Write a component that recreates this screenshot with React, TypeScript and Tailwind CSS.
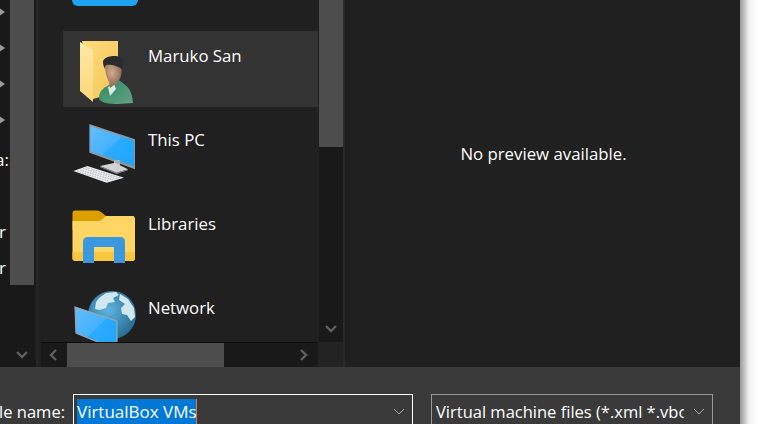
import React from "react";

const Chevron = ({ dir }: { dir: "down" | "left" | "right" }) => {
  const d: Record<string, string> = {
    down: "M1 3 L6 8 L11 3",
    left: "M8 1 L3 6 L8 11",
    right: "M3 1 L8 6 L3 11",
  };
  return (
    <svg width="12" height="12" viewBox="0 0 12 12" className="block" fill="none">
      <path d={d[dir]} stroke="#5f5f5f" strokeWidth="2.4" />
    </svg>
  );
};

const SmallChevron = () => (
  <svg width="12" height="8" viewBox="0 0 12 8" fill="none" className="block">
    <path d="M1 1 L6 6 L11 1" stroke="#a8a8a8" strokeWidth="1" />
  </svg>
);

const TreeArrow = () => (
  <svg width="7" height="10" viewBox="0 0 7 10" className="block">
    <path d="M0 0 L7 5 L0 10 Z" fill="#9a9a9a" />
  </svg>
);

const UserIcon = () => (
  <svg width="64" height="66" viewBox="0 0 64 66" className="block">
    <defs>
      <linearGradient id="uf1" x1="0" y1="0" x2="1" y2="1">
        <stop offset="0" stopColor="#ffdc7d" />
        <stop offset="1" stopColor="#f3c55a" />
      </linearGradient>
      <linearGradient id="uf2" x1="0" y1="0" x2="0" y2="1">
        <stop offset="0" stopColor="#ffe9a6" />
        <stop offset="1" stopColor="#fcd878" />
      </linearGradient>
      <radialGradient id="uface" cx="0.4" cy="0.35" r="0.8">
        <stop offset="0" stopColor="#d0ac90" />
        <stop offset="1" stopColor="#77543f" />
      </radialGradient>
      <linearGradient id="ushirt" x1="0" y1="0" x2="1" y2="1">
        <stop offset="0" stopColor="#2f8a62" />
        <stop offset="1" stopColor="#62a284" />
      </linearGradient>
    </defs>
    <path d="M10 2 H46 V53 L21 60 Z" fill="url(#uf1)" />
    <path d="M8 3 L21 11 V63 L8 52 Z" fill="url(#uf2)" />
    <path d="M27 60 C27 52 31 49 37 46 L47 41 C52 46 60 47 61 64 L46 65 C36 65 30 64 27 60 Z" fill="url(#ushirt)" />
    <path d="M36 48 L42 45 L44 50 L38 57 Z" fill="#dbe9e7" />
    <path d="M33 25 H50 C50 34 49 40 45 44 L38 49 L37 43 C34 38 33 32 33 25 Z" fill="url(#uface)" />
    <path d="M31 23 C31 19 37 17 42 17 C48 17 52 19 52 24 C51 26 50 28 50 31 C48 27 38 25 34 26 C33 27 33 28 33 30 C32 28 31 26 31 23 Z" fill="#2b2b2b" />
  </svg>
);

const PcIcon = () => (
  <svg width="64" height="62" viewBox="0 0 64 62" className="block">
    <defs>
      <linearGradient id="pc" x1="0" y1="0" x2="1" y2="1">
        <stop offset="0" stopColor="#63beff" />
        <stop offset="0.5" stopColor="#45b2ff" />
        <stop offset="0.5" stopColor="#2aabff" />
        <stop offset="1" stopColor="#1fa5ff" />
      </linearGradient>
    </defs>
    <path d="M17.3 1 L63 16.3 V46.3 L17.3 29.7 Z" fill="#8f959a" />
    <path d="M18.3 3 L62 17.5 V43 L18.3 28.2 Z" fill="url(#pc)" />
    <path d="M42 37 H48 V43 H42 Z" fill="#a9b0b5" />
    <path d="M28 43 L43 39.7 L56 46.3 L44.7 49.7 Z" fill="#cfd3d6" />
    <path d="M28 43 V44 L44.7 51 L56 47.3 V46.3 L44.7 49.7 Z" fill="#8d9296" />
    <path d="M1.3 48 L15.3 43 L52 54.7 L34.7 59.7 Z" fill="#e8eaec" />
    <path d="M5 48.5 L37 58 M8 47 L41 57 M11 45.5 L45 56 M14 44.5 L48 55" stroke="#a5a9ac" strokeWidth="0.7" strokeDasharray="1.6 1" />
  </svg>
);

const LibIcon = () => (
  <svg width="64" height="54" viewBox="0 0 64 54" className="block">
    <path d="M0.5 3 Q0.5 0.5 3 0.5 H25 Q27 0.5 29 2 L34 6 H62 V20 H0.5 Z" fill="#dd9e00" />
    <path d="M0.5 11 H26 Q28 11 30 9.5 L34 6 H60 Q63 6 63 9 V48 Q63 51 60 51 H3.5 Q0.5 51 0.5 48 Z" fill="#ffd564" />
    <path d="M0.5 42 V48 Q0.5 51 3.5 51 H60 Q63 51 63 48 V42 Z" fill="#f8c63f" />
    <path d="M11 53 V32 Q11 27 16 27 H48 Q53 27 53 32 V53 H42 V37 H22 V53 Z" fill="#3a98df" />
  </svg>
);

const NetIcon = () => (
  <svg width="64" height="60" viewBox="0 0 64 60" className="block">
    <defs>
      <radialGradient id="gl" cx="0.42" cy="0.4" r="0.72">
        <stop offset="0" stopColor="#5db4df" />
        <stop offset="1" stopColor="#20628a" />
      </radialGradient>
      <linearGradient id="sc" x1="0" y1="0" x2="1" y2="1">
        <stop offset="0" stopColor="#63beff" />
        <stop offset="0.5" stopColor="#45b2ff" />
        <stop offset="0.5" stopColor="#2aabff" />
        <stop offset="1" stopColor="#1fa5ff" />
      </linearGradient>
    </defs>
    <circle cx="40" cy="25" r="24" fill="url(#gl)" />
    <path d="M27 8 L34 3 L44 2 L47 5 L41 8 L43 12 L36 13 L34 18 L28 20 L23 19 L24 12 Z" fill="#d3e8ee" />
    <path d="M48 4 L56 9 L62 18 L63 27 L59 31 L55 25 L50 24 L49 18 L53 14 L47 10 Z" fill="#d3e8ee" />
    <path d="M3 17 L45 31 V60 L4 43 Z" fill="url(#sc)" stroke="#9ea4a8" strokeWidth="1.2" />
  </svg>
);

const Place = ({
  icon,
  label,
  active,
  iconPad,
}: {
  icon: React.ReactNode;
  label: string;
  active?: boolean;
  iconPad: string;
}) => (
  <div className={`h-[76px] shrink-0 flex items-start ${active ? "bg-[#333333]" : ""}`}>
    <div className={`w-[85px] h-full pl-[9px] shrink-0 ${iconPad}`}>{icon}</div>
    <span className="text-[16.8px] leading-[22px] pt-[14px] text-white">{label}</span>
  </div>
);

const TreeRow = ({ children, end }: { children?: React.ReactNode; end?: string }) => (
  <div className={`h-9 shrink-0 flex items-center overflow-hidden ${end ?? ""}`}>{children}</div>
);

export default function App() {
  return (
    <div
      className="w-[758px] h-[424px] overflow-hidden flex bg-white text-white"
      style={{ fontFamily: '"Open Sans", "Noto Sans", sans-serif' }}
    >
      <div className="w-[740px] h-full flex flex-col shrink-0 bg-[#3a3a3a]">
        <div className="h-[367px] flex shrink-0 bg-[#202020]">
          {/* tree pane */}
          <div className="w-[10px] flex flex-col bg-[#191919] -mt-[6px] text-[17px] shrink-0 overflow-hidden">
            <TreeRow end="justify-start -ml-[2px]"><TreeArrow /></TreeRow>
            <TreeRow end="justify-start -ml-[2px]"><TreeArrow /></TreeRow>
            <TreeRow end="justify-start -ml-[2px]"><TreeArrow /></TreeRow>
            <TreeRow end="justify-start -ml-[2px]"><TreeArrow /></TreeRow>
            <TreeRow end="justify-end"><span className="whitespace-nowrap pt-2 pr-[1px]">a:</span></TreeRow>
            <TreeRow />
            <TreeRow end="justify-end"><span className="whitespace-nowrap pt-2 pr-[4px]">r</span></TreeRow>
            <TreeRow end="justify-end"><span className="whitespace-nowrap pt-2 pr-[4px]">r</span></TreeRow>
          </div>
          {/* tree scrollbar */}
          <div className="w-[26px] flex flex-col bg-[#191919] shrink-0">
            <div className="h-[285px] w-[24px] bg-[#4d4d4d]" />
            <div className="flex-1 flex items-end justify-center pb-[6px] pr-[2px]">
              <Chevron dir="down" />
            </div>
          </div>
          <div className="w-[2px] bg-[#262626] shrink-0" />
          {/* places */}
          <div className="w-[306px] pl-[3px] flex flex-col shrink-0">
            <div className="h-[342px] flex shrink-0">
              <div className="w-[277px] pl-[22px] flex flex-col gap-2 overflow-hidden shrink-0">
                <div className="h-[23px] shrink-0 flex items-end pl-[9px] pb-[17px]">
                  <div className="w-[66px] h-[6px] rounded-b-[12px] bg-[#1ea4ee]" />
                </div>
                <Place active label="Maruko San" icon={<UserIcon />} iconPad="pt-[8px]" />
                <Place label="This PC" icon={<PcIcon />} iconPad="pt-[8px]" />
                <Place label="Libraries" icon={<LibIcon />} iconPad="pt-[11px]" />
                <Place label="Network" icon={<NetIcon />} iconPad="pt-[7px]" />
              </div>
              <div className="w-[25px] ml-[1px] flex flex-col bg-[#191919] shrink-0">
                <div className="h-[147px] w-[24px] bg-[#4d4d4d]" />
                <div className="flex-1 flex items-end justify-center pb-[7px] pr-[1px]">
                  <Chevron dir="down" />
                </div>
              </div>
            </div>
            <div className="h-[25px] flex shrink-0">
              <div className="w-[277px] flex bg-[#191919] border-t border-[#0c0c0c]">
                <div className="w-[26px] flex items-center justify-center shrink-0">
                  <Chevron dir="left" />
                </div>
                <div className="w-[157px] h-[24px] bg-[#4d4d4d] shrink-0" />
                <div className="flex-1 flex items-center justify-end pr-[8px]">
                  <Chevron dir="right" />
                </div>
              </div>
              <div className="flex-1 bg-[#232323]" />
            </div>
          </div>
          <div className="w-[2px] bg-[#2a2a2a] -ml-[1px] shrink-0" />
          {/* preview */}
          <div className="flex-1 flex justify-center pt-[143px] pl-[2px] text-[16.8px] leading-[22px]">
            No preview available.
          </div>
        </div>
        {/* bottom bar */}
        <div className="flex-1 flex items-start pt-[27px] text-[16.5px] leading-[22px]">
          <div className="w-[65px] mr-[8px] flex justify-end overflow-hidden shrink-0 pt-[7px]">
            <span className="whitespace-nowrap">File name:</span>
          </div>
          <div className="w-[340px] h-[40px] border border-white flex items-start pl-[3px] pt-[4px] shrink-0">
            <span className="bg-[#0078d7] border-r border-[#e07a2c] h-[26px] pt-[2px] whitespace-nowrap w-[120px] text-[17px]">VirtualBox VMs</span>
            <div className="flex-1 flex justify-end pr-[7px] pt-[9px]">
              <SmallChevron />
            </div>
          </div>
          <div className="w-[282px] h-[40px] ml-[18px] border border-[#9a9a9a] flex items-start pl-[4px] pt-[6px] shrink-0">
            <span className="w-[248px] overflow-hidden whitespace-nowrap">Virtual machine files (*.xml *.vbox)</span>
            <div className="flex-1 flex justify-end pr-[7px] pt-[7px]">
              <SmallChevron />
            </div>
          </div>
        </div>
      </div>
      <div className="flex-1 h-full bg-gradient-to-r from-[#9a9a9a] via-[#f2f2f2] to-white" />
    </div>
  );
}
